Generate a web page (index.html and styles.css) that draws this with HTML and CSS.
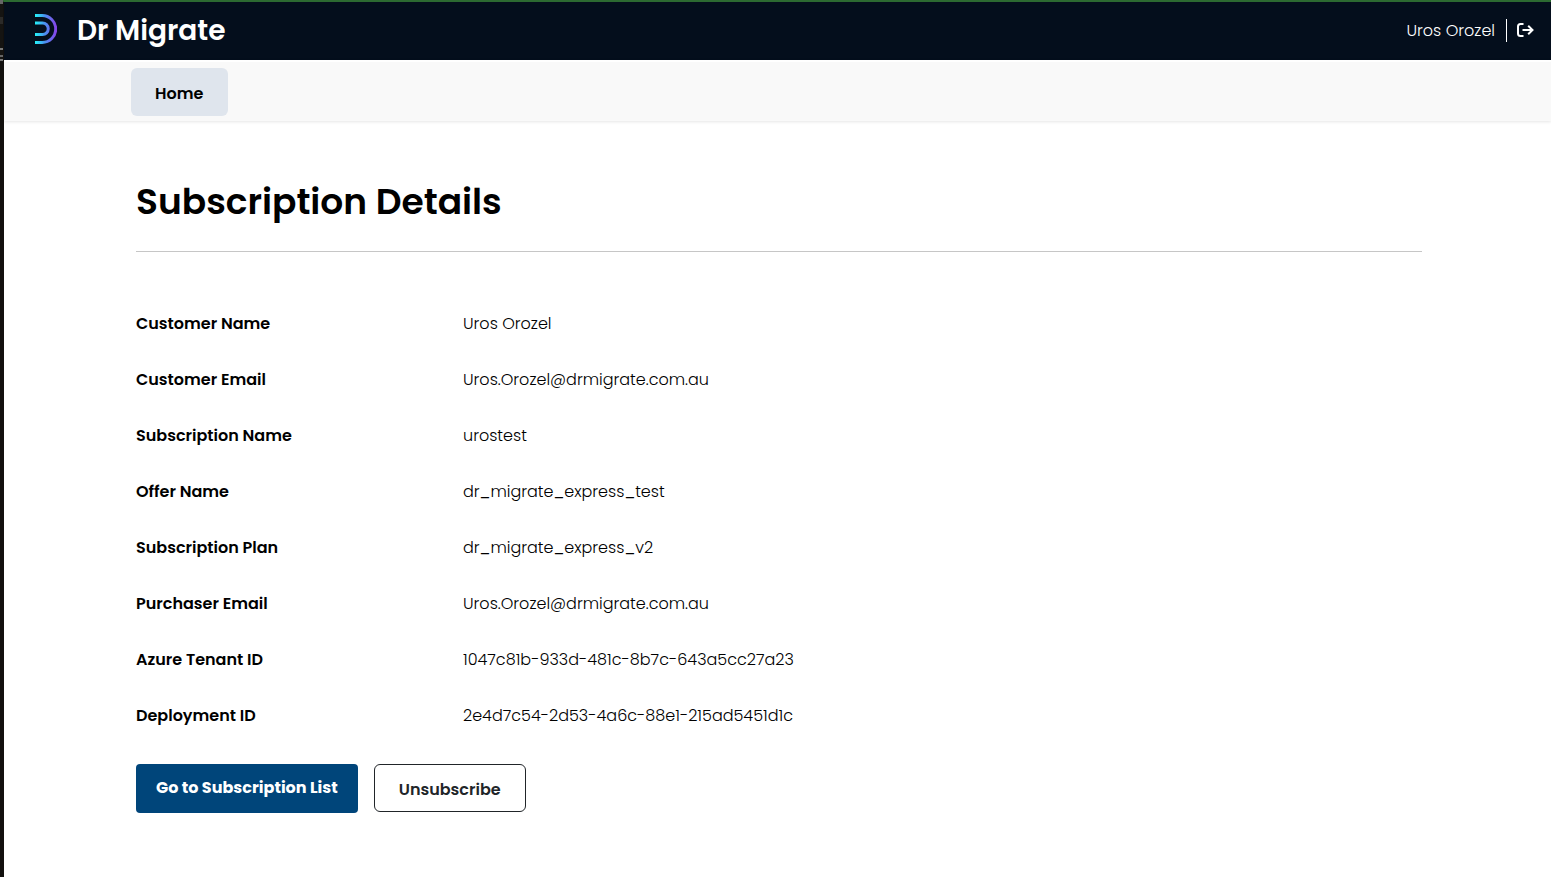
FILE: index.html
```html
<!DOCTYPE html>
<html lang="en">
<head>
  <meta charset="UTF-8">
  <meta name="viewport" content="width=device-width, initial-scale=1.0">
  <title>Dr Migrate - Subscription Details</title>
  <link rel="stylesheet" href="styles.css">
</head>
<body>
  <header class="header">
    <a href="#" class="brand">
      <svg class="brand-mark" viewBox="0 0 22 30" fill="none" aria-hidden="true">
        <defs>
          <linearGradient id="markGradient" gradientUnits="userSpaceOnUse" x1="0" y1="0" x2="22" y2="0">
            <stop offset="0" stop-color="#22f4f8"/>
            <stop offset="0.45" stop-color="#4a90f0"/>
            <stop offset="1" stop-color="#8a3ee8"/>
          </linearGradient>
        </defs>
        <path d="M0 1.500H7.200A13.500 13.500 0 0 1 7.200 28.500H0" stroke="url(#markGradient)" stroke-width="3"/>
        <path d="M0 9H7.500A5.750 5.750 0 0 1 7.500 20.500H0" stroke="url(#markGradient)" stroke-width="3"/>
      </svg>
      <span class="brand-name">Dr Migrate</span>
    </a>
    <div class="account">
      <span class="account-name">Uros Orozel</span>
      <a href="#" class="sign-out" aria-label="Sign out">
        <svg viewBox="0 0 17 14" fill="none" stroke="#fff" stroke-width="2" aria-hidden="true">
          <path d="M6.500 1H3.500Q1 1 1 3.500V10.500Q1 13 3.500 13H6.500"/>
          <path d="M5.500 7H15.500M11.200 2.700L15.500 7L11.200 11.300"/>
        </svg>
      </a>
    </div>
  </header>

  <nav class="navbar">
    <a href="#" class="nav-link">Home</a>
  </nav>

  <main class="content">
    <h1>Subscription Details</h1>

    <dl class="details">
      <dt>Customer Name</dt>
      <dd>Uros Orozel</dd>
      <dt>Customer Email</dt>
      <dd>Uros.Orozel@drmigrate.com.au</dd>
      <dt>Subscription Name</dt>
      <dd>urostest</dd>
      <dt>Offer Name</dt>
      <dd>dr_migrate_express_test</dd>
      <dt>Subscription Plan</dt>
      <dd>dr_migrate_express_v2</dd>
      <dt>Purchaser Email</dt>
      <dd>Uros.Orozel@drmigrate.com.au</dd>
      <dt>Azure Tenant ID</dt>
      <dd>1047c81b-933d-481c-8b7c-643a5cc27a23</dd>
      <dt>Deployment ID</dt>
      <dd>2e4d7c54-2d53-4a6c-88e1-215ad5451d1c</dd>
    </dl>

    <div class="actions">
      <a href="#" class="button button-primary">Go to Subscription List</a>
      <button type="button" class="button button-outline">Unsubscribe</button>
    </div>
  </main>
</body>
</html>
```

FILE: styles.css
```css
* {
  box-sizing: border-box;
}
body {
  margin: 0;
  min-height: 100vh;
  border-top: 2px solid #2c6a31;
  border-left: 4px solid #12100e;
  background: #fff;
  color: #000;
  font-family: Poppins, Inter, sans-serif;
  font-size: 16px;
  line-height: 24px;
}
/* sliver of the window behind, along the left edge */
body::before {
  content: "";
  position: absolute;
  top: 0;
  left: 0;
  width: 3px;
  height: 62px;
  background: linear-gradient(#666 0 4px, #151412 4px 17px, #2b2a28 17px 24px, #151412 24px 48px, #777 48px 50px, #151412 50px 55px, #666 55px 57px, #151412 57px 59px, #777 59px 61px, #151412 61px);
}
a {
  color: inherit;
  text-decoration: none;
}
.header {
  display: flex;
  align-items: center;
  justify-content: space-between;
  height: 58px;
  padding: 0 17px 4px 31px;
  background: #040e1c;
  color: #fff;
}
.brand {
  display: flex;
  align-items: center;
  gap: 20px;
}
.brand-mark {
  width: 22px;
  height: 30px;
}
.brand-name {
  padding-top: 4px;
  font-size: 28px;
  font-weight: 600;
  line-height: 40px;
}
.account {
  display: flex;
  align-items: center;
  margin-top: 2px;
}
.account-name {
  padding: 1px 11px 0 0;
  border-right: 1px solid #fff;
  font-weight: 300;
  line-height: 22px;
}
.sign-out {
  display: flex;
  margin-left: 10px;
}
.sign-out svg {
  width: 17px;
  height: 14px;
}
.navbar {
  display: flex;
  padding: 6px 127px 5px;
  border-top: 2px solid #fff;
  background: #f9f9f9;
  box-shadow: 0 1px 3px rgba(0, 0, 0, 0.1);
}
.nav-link {
  padding: 14px 25px 10px 24px;
  border-radius: 6px;
  background: #dfe5ed;
  font-weight: 600;
}
.content {
  padding: 52px 129px 64px 132px;
}
h1 {
  margin: 0 0 44px;
  padding-bottom: 20px;
  border-bottom: 1px solid #c6c6c6;
  font-size: 36px;
  font-weight: 600;
  line-height: 58px;
}
.details {
  display: grid;
  grid-template-columns: 327px 1fr;
  margin: 0 0 20px;
}
.details dt,
.details dd {
  margin: 0;
  padding: 16px 0;
}
.details dt {
  font-weight: 600;
}
.details dd {
  font-weight: 300;
}
.actions {
  display: flex;
  align-items: flex-start;
  gap: 16px;
}
.button {
  border-radius: 4px;
  font: inherit;
  cursor: pointer;
}
.button-primary {
  padding: 12px 20px 13px;
  background: #00457a;
  color: #fff;
  font-weight: 700;
}
.button-outline {
  padding: 13px 24px 9px;
  border: 1px solid #212529;
  border-radius: 6px;
  background: #fff;
  color: #212529;
  font-weight: 600;
}
```
